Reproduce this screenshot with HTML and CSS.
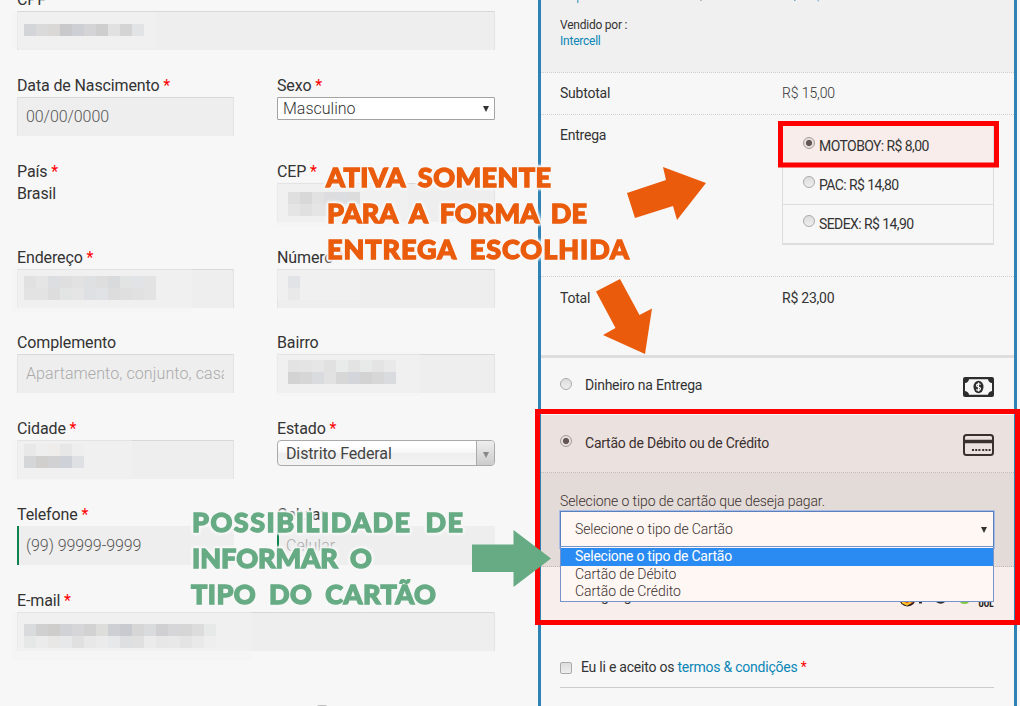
FILE: index.html
```html
<!DOCTYPE html>
<html lang="pt-BR">
<head>
<meta charset="utf-8">
<title>Finalizar compra</title>
<link rel="stylesheet" href="styles.css">
</head>
<body>
<div class="page">
  <main class="billing">
    <div class="field wide"><div class="label">CPF <i class="faint">* *</i></div><div class="input"></div></div>
    <div class="field"><div class="label">Data de Nascimento <i>*</i></div><div class="input">00/00/0000</div></div>
    <div class="field"><div class="label">Sexo <i>*</i></div><div class="native"><span>Masculino</span><b class="caret"></b></div></div>
    <div class="field"><div class="label">País <i>*</i></div><div class="label">Brasil</div></div>
    <div class="field"><div class="label">CEP <i>*</i></div><div class="input"></div></div>
    <div class="field"><div class="label">Endereço <i>*</i></div><div class="input"></div></div>
    <div class="field"><div class="label">Número <i>*</i></div><div class="input"></div></div>
    <div class="field"><div class="label">Complemento</div><div class="input hint"><div class="clip">Apartamento, conjunto, casa</div></div></div>
    <div class="field"><div class="label">Bairro</div><div class="input"></div></div>
    <div class="field"><div class="label">Cidade <i>*</i></div><div class="input"></div></div>
    <div class="field"><div class="label">Estado <i>*</i></div><div class="chosen"><span>Distrito Federal</span><div class="arrow"><b class="caret"></b></div></div></div>
    <div class="field"><div class="label">Telefone <i>*</i></div><div class="input valid">(99) 99999-9999</div></div>
    <div class="field"><div class="label">Celular</div><div class="input valid hint">Celular</div></div>
    <div class="field wide"><div class="label">E-mail <i>*</i></div><div class="input"></div></div>
    <div class="next"></div>
  </main>
  <aside class="order">
    <div class="product"><div>Vendido por :</div><a>Intercell</a></div>
    <div class="line subtotal"><span>Subtotal</span><span class="amount">R$ 15,00</span></div>
    <div class="line delivery"><span>Entrega</span>
      <div class="methods">
        <div class="method chosen-method"><b class="radio on"></b><span>MOTOBOY: R$ 8,00</span></div>
        <div class="method"><b class="radio"></b><span>PAC: R$ 14,80</span></div>
        <div class="method"><b class="radio"></b><span>SEDEX: R$ 14,90</span></div>
      </div>
    </div>
    <div class="line total"><span>Total</span><span>R$ 23,00</span></div>
    <div class="pay cash"><b class="radio"></b><span>Dinheiro na Entrega</span>
      <svg class="icon" width="31" height="20" viewBox="0 0 31 20"><rect width="31" height="20" rx="2" fill="#2d2d2d"/><path d="M6 2.200H25Q25.500 5.500 29 6V14Q25.500 14.500 25 17.800H6Q5.500 14.500 2 14V6Q5.500 5.500 6 2.200Z" fill="#f7f7f7"/><ellipse cx="15.500" cy="10" rx="5" ry="6.200" fill="#2d2d2d"/><path d="M17.600 7.500Q15.500 6 14 7.500T15.500 10T17 12.500T13.300 12.500M15.500 5.500V14.500" fill="none" stroke="#f7f7f7" stroke-width="1.200"/></svg>
    </div>
    <div class="pay card"><b class="radio on"></b><span>Cartão de Débito ou de Crédito</span>
      <svg class="icon" width="31" height="22" viewBox="0 0 31 22"><rect x="1" y="1" width="29" height="20" rx="2.500" fill="none" stroke="#3b302f" stroke-width="2"/><path d="M1 7.500H30" stroke="#3b302f" stroke-width="3.500"/><path d="M9 16H17.500M19.200 16H27.700" stroke="#3b302f" stroke-width="2" stroke-dasharray="2 1.200"/></svg>
    </div>
    <div class="box"><div class="prompt">Selecione o tipo de cartão que deseja pagar.</div>
      <div class="select"><span>Selecione o tipo de Cartão</span><b class="caret"></b>
        <div class="menu"><div class="active">Selecione o tipo de Cartão</div><div>Cartão de Débito</div><div>Cartão de Crédito</div></div>
      </div>
    </div>
    <div class="pay pagseguro"><span>PagSeguro</span>
      <svg class="logos" width="96" height="20" viewBox="0 0 96 20"><circle cx="9.500" cy="7" r="8.500" fill="#282020"/><path d="M2 10Q9 17 17 10L14 5H3Z" fill="#e94f19"/><path d="M4 11L9 13.500L13 11" stroke="#ffc629" stroke-width="2" fill="none"/><path d="M21 11h3v1.500h-3zM38 11Q43 14.500 47 11" fill="#2d2d2d"/><ellipse cx="66.500" cy="10" rx="4.500" ry="3" fill="#80c940"/><text x="80.500" y="16" class="uol" textLength="15" lengthAdjust="spacingAndGlyphs">UOL</text></svg>
    </div>
    <div class="terms"><b class="check"></b><span>Eu li e aceito os <a>termos &amp; condições</a> <i>*</i></span></div>
  </aside>
</div>
<svg class="notes" width="1020" height="706" viewBox="0 0 1020 706">
  <g id="mosaics"></g>
  <path d="M577 0h1.500v3h-1.500zM794 0h1.500v1h-1.500zM817.500 0h1.500l-1 2z" fill="#69a9cb"/><path d="M700 0h2v1h-2z" fill="#bbb"/>
  <rect x="780.500" y="123.500" width="216" height="41.500" class="frame"/>
  <rect x="537.500" y="411.500" width="480" height="211" class="frame"/>
  <g fill="#ea5b0c">
    <path d="M627 193L666 180L663 167L706 183L677 220L673 206L635 218Z"/>
    <path d="M596 291.500L620 279L639.500 315L652 308.500L645 354L603 335L615.500 328Z"/>
    <g class="display orange"><text x="326" y="187" textLength="225">ATIVA SOMENTE</text><text x="327" y="223" textLength="260">PARA A FORMA DE</text><text x="327" y="259" textLength="302">ENTREGA ESCOLHIDA</text></g>
  </g>
  <g fill="#66ab84">
    <path d="M472 544.500H513.500V530L551 558.500L513.500 587V572H472Z"/>
    <g class="display green"><text x="192" y="532" textLength="271">POSSIBILIDADE DE</text><text x="192" y="568" textLength="180">INFORMAR O</text><text x="191" y="604" textLength="245">TIPO DO CARTÃO</text></g>
  </g>
</svg>
<script src="mosaic.js"></script>
</body>
</html>
```
FILE: styles.css
```css
* { box-sizing: border-box; }
body { margin: 0; width: 1020px; height: 706px; overflow: hidden; background: #f7f7f7; color: #333; font-family: Roboto, sans-serif; font-size: 14px; }
i { color: #f00; font-style: normal; }
a { color: #0a86b5; }
.page { display: flex; height: 706px; overflow: hidden; }
.billing { width: 538px; flex: none; padding-left: 17px; margin-top: -10.8px; display: grid; grid-template-columns: 217px 218px; column-gap: 43px; grid-auto-rows: 85.8px; align-content: start; }
.wide { grid-column: 1 / 3; }
.label { height: 22px; line-height: 22px; font-size: 16px; white-space: nowrap; letter-spacing: -.13px; }
.faint { opacity: .2; }
.input { height: 39px; line-height: 38px; background: #eee; border: 1px solid #e3e3e3; border-top: 1px solid #d8d8d8; border-bottom: 0; padding: 0 9px 0 8px; font-size: 16px; font-weight: 300; color: #555; white-space: nowrap; overflow: hidden; letter-spacing: -.07px; }
.hint { color: #aaa; letter-spacing: .1px; }
.clip { overflow: hidden; }
.valid { border: 0; border-left: 2px solid #0f834d; padding-left: 7px; line-height: 39px; }
.caret { width: 0; height: 0; border: 3.5px solid transparent; border-top: 6px solid #333; border-bottom: 0; }
.native { height: 23px; border: 1px solid #a3a3a3; background: #fff; display: flex; align-items: center; justify-content: space-between; padding: 0 5px; font-size: 16px; font-weight: 300; border-radius: 1px; }
.chosen { height: 26px; border: 1px solid #aaa; border-radius: 4px; background: linear-gradient(#fff 20%, #f6f6f6 50%, #eee 52%, #f4f4f4); display: flex; justify-content: space-between; padding-left: 8px; line-height: 25px; font-size: 16px; color: #444; overflow: hidden; letter-spacing: -.13px; }
.arrow { width: 18px; border-left: 1px solid #aaa; background: linear-gradient(#eee, #ccc); display: flex; align-items: center; justify-content: center; padding-top: 4px; }
.arrow .caret { border-top-color: #888; }
.next { width: 10px; height: 2px; background: #bbb; margin: 29px 0 0 300px; border-radius: 2px 2px 0 0; }
.order { width: 479px; flex: none; border: solid #2e83b4; border-width: 0 3px; letter-spacing: -.23px; }
.product { height: 73px; background: #f0f0f0; border-bottom: 1px dotted #d0d0d0; padding: 17px 19px 0; font-size: 12px; line-height: 16px; }
.line { display: grid; grid-template-columns: 222px 212px; padding: 0 19px; line-height: 41px; border-bottom: 1px dotted #d0d0d0; }
.subtotal { height: 42px; }
.amount { font-weight: 300; letter-spacing: -.1px; }
.delivery { height: 162px; }
.methods { margin-top: 9px; height: 121px; border: 1px solid #ddd; border-bottom-width: 2px; }
.method { height: 39px; border-bottom: 1px solid #ddd; display: flex; line-height: 39px; padding-left: 20px; gap: 4px; letter-spacing: -.58px; }
.method:nth-child(1) { height: 41px; line-height: 42px; background: #f8edea; }
.method:last-child { border: 0; }
.method .radio { margin-top: 10px; }
.method:nth-child(1) .radio { margin-top: 12px; }
.radio { flex: none; width: 12px; height: 12px; border: 1px solid #aaa; border-radius: 50%; background: linear-gradient(#ddd, #eee); }
.radio.on { background: radial-gradient(circle, #655 0 2.700px, #e5dfdd 3.500px); border-color: #a49b99; }
.total { height: 81px; line-height: 42px; border-bottom: 3px solid #ddd; }
.pay { display: flex; padding: 0 20px 0 19px; }
.pay .radio { margin-right: 13px; }
.icon { margin-left: auto; }
.cash { height: 57px; line-height: 55px; }
.cash .radio { margin-top: 20px; }
.cash .icon { margin-top: 19px; }
.card { height: 58px; line-height: 57px; background: #ebe2df; border-bottom: 1px dotted #c4b9b5; color: #3c302f; }
.card .radio { margin-top: 20px; }
.card .icon { margin-top: 19px; }
.box { height: 94px; background: #e3dbd7; border-bottom: 1px dotted #c4b9b5; padding: 18px 20px 0 19px; font-weight: 300; color: #3c302f; letter-spacing: -.1px; }
.prompt { height: 20px; line-height: 20px; }
.select { position: relative; height: 37px; border: 1px solid #5a80c0; outline: 1px solid #a9bce6; background: #fff7f4; padding: 0 6px 0 14px; display: flex; align-items: center; justify-content: space-between; line-height: 34px; }
.select > span { padding-bottom: 1px; }
.menu { position: absolute; left: -1px; right: -1px; top: 34px; height: 56px; padding-top: 1px; border: 1px solid #7893c9; background: #fff7f4; line-height: 17px; z-index: 2; }
.menu div { padding-left: 14px; height: 17.700px; }
.menu .active { background: #2a8bf2; color: #fff; font-weight: 400; letter-spacing: -.25px; }
.pagseguro { height: 56px; background: #f8eeeb; padding-left: 44px; line-height: 61px; }
.pagseguro span { line-height: 58px; }
.logos { margin: 24px 0 0 auto; }
.uol { font: 900 9px Roboto, sans-serif; fill: #282424; letter-spacing: 0; }
.terms { margin: 27px 20px 0 19px; height: 38px; border-bottom: 1px solid #ccc; display: flex; gap: 9px; line-height: 35px; }
.check { width: 12px; height: 12px; border: 1px solid #aaa; border-radius: 2px; background: linear-gradient(#ddd, #eee); margin-top: 12px; }
.notes { position: absolute; left: 0; top: 0; z-index: 5; }
.frame { fill: none; stroke: #f00; stroke-width: 5; }
.display { filter: drop-shadow(0 0 1px #f7f7f7) drop-shadow(0 0 1px #f7f7f7) drop-shadow(0 0 1px #f7f7f7) drop-shadow(0 0 1px #f7f7f7); }
.display text { font: 900 27px Lato, sans-serif; word-spacing: 6px; stroke-width: 1.3px; }
.orange { stroke: #ea5b0c; }
.green { stroke: #66ab84; }
```
FILE: mosaic.js
```js
// Redaction blocks drawn over the private values, in 12px cells.
const blocks = [
  { x: 24, y: 24, halo: [12, 12, 144, 36], rows: ['d4d5d8 dadada d9d8d7 c9c9cb cecfd5 d4d4d7 cececf e0e1e0 d4d4d4 e2e3e5'] },
  { x: 24, y: 276, halo: [12, 268, 180, 44], rows: ['e1e1e1 e5e5e5 dcdee1 dfdfdf e2e2e2 dfe0e2 dedede d9dadb e2e4e3 e2e3e6 e3e3e3', 'e3e3e3 e3e3e3 dddddd e3e5e4 e5e5e5 dfe0e3 e1e2e5 dddddd dfdfdf e1e1e1 e3e3e3'] },
  { x: 24, y: 444, halo: [12, 440, 120, 40], rows: ['e8e8e8 eeeeee eeedeb e7e7e8 eeeeee', 'd5d6d8 d0cfce d1d1d3 ced1d8 dfe0e3'] },
  { x: 24, y: 624, halo: [12, 612, 240, 48], rows: ['dadbdd d1d0d1 cfcccc d1d2d6 d6d6d8 d2d2d2 dddddb cecfd5 c9cacf d6d6d7 dadbdd d0d0d2 d6d6d8 d7d6d6 dcdcdc e7e8e8', 'e6e8e7 ebebeb e9e7e6 e7e8ea e0e0e0 e8e8e8 ebebeb e7e8e9 dedfe1 e0e0e0 ebebeb e7e7e7 e8e8e8 e4e4e4 e9e9e9 eeeeee'] },
  { x: 288, y: 192, halo: [276, 182, 132, 44], rows: ['dfdfdf d8d8d8 e2e2e2 dddddf dcdde0 dcdcdc', 'e5e5e5 e0e0e0 e5e5e5 e3e3e3 e6e6e6 e7e7e7'] },
  { x: 288, y: 276, halo: [276, 268, 84, 32], rows: ['e2e3e6', 'e9e9e9'] },
  { x: 288, y: 360, halo: [276, 352, 144, 44], rows: ['e3e3e3 e4e4e4 e6e6e6 e1e1e1 e9ebeb e3e3e4 e8eae9 e4e4e4 e9e9e9', 'd3d3d3 d6d6d6 dadbde e2e2e2 d7d7d7 d4d5da d3d3d4 d6d7d6 dadbde'] }
];
const draw = (x, y, w, h, fill, opacity) => {
  const r = document.createElementNS('http://www.w3.org/2000/svg', 'rect');
  Object.entries({ x, y, width: w, height: h, fill, opacity }).forEach(([k, v]) => r.setAttribute(k, v));
  document.getElementById('mosaics').append(r);
};
blocks.forEach(b => {
  draw(...b.halo, '#f1f1f1', 0.45);
  b.rows.forEach((row, j) => row.split(' ').forEach((c, i) => draw(b.x + i * 12, b.y + j * 12, 12, 12, '#' + c, 1)));
});
```
